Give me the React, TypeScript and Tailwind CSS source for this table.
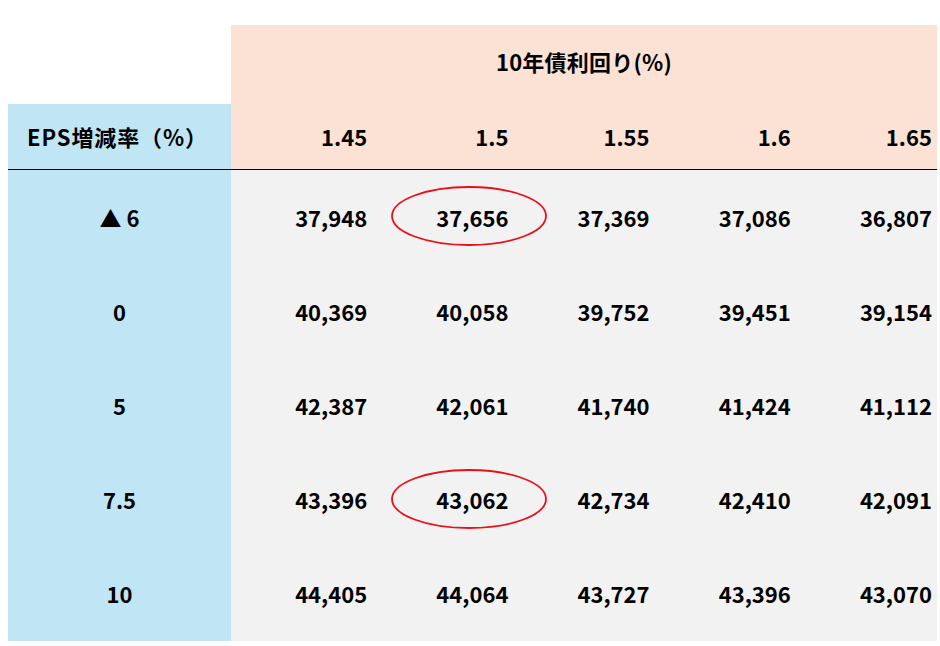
import React from 'react';

const yields = ['1.45', '1.5', '1.55', '1.6', '1.65'];

const rows: { label: string; values: string[] }[] = [
    { label: '▲ 6', values: ['37,948', '37,656', '37,369', '37,086', '36,807'] },
    { label: '0', values: ['40,369', '40,058', '39,752', '39,451', '39,154'] },
    { label: '5', values: ['42,387', '42,061', '41,740', '41,424', '41,112'] },
    { label: '7.5', values: ['43,396', '43,062', '42,734', '42,410', '42,091'] },
    { label: '10', values: ['44,405', '44,064', '43,727', '43,396', '43,070'] },
];

// 丸で囲むセル (行-列)
const circled = new Set(['0-1', '3-1']);

export default function App() {
    return (
        <div
            className="w-[940px] h-[646px] bg-white pt-[25px] pl-[8px] text-black font-bold"
            style={{ fontFamily: '"Noto Sans CJK JP", "Noto Sans", sans-serif' }}
        >
            <div className="grid grid-cols-[223px_repeat(5,141.2px)] grid-rows-[79px_66px_repeat(5,94.2px)]">
                {/* Title row */}
                <div className="bg-white" />
                <div className="col-span-5 bg-[#fbe2d5] flex items-center justify-center text-[22px] tracking-[0.01em] pb-[6px]">
                    10年債利回り(%)
                </div>

                {/* Header row */}
                <div className="bg-[#c0e6f5] border-b-[1.5px] border-black flex items-center justify-center text-[22px] tracking-[0.04em] pr-[4px]">
                    EPS増減率（%）
                </div>
                {yields.map((y) => (
                    <div
                        key={y}
                        className="bg-[#fbe2d5] border-b-[1.5px] border-black flex items-center justify-end pr-[5px] text-[22px]"
                    >
                        {y}
                    </div>
                ))}

                {/* Body */}
                {rows.map((r, ri) => (
                    <React.Fragment key={r.label}>
                        <div className="bg-[#c0e6f5] flex items-center justify-center text-[22px] whitespace-pre">
                            {r.label}
                        </div>
                        {r.values.map((v, ci) => (
                            <div
                                key={v + ci}
                                className="relative bg-[#f2f2f2] flex items-center justify-end pr-[5px] text-[22px]"
                            >
                                {v}
                                {circled.has(`${ri}-${ci}`) && (
                                    <svg
                                        className="absolute z-10 left-[19px] top-[16px] overflow-visible"
                                        width="156"
                                        height="60"
                                        viewBox="0 0 156 60"
                                    >
                                        <ellipse cx="78" cy="30" rx="77" ry="29" fill="none" stroke="#e8111a" strokeWidth="1.8" />
                                    </svg>
                                )}
                            </div>
                        ))}
                    </React.Fragment>
                ))}
            </div>
        </div>
    );
}
